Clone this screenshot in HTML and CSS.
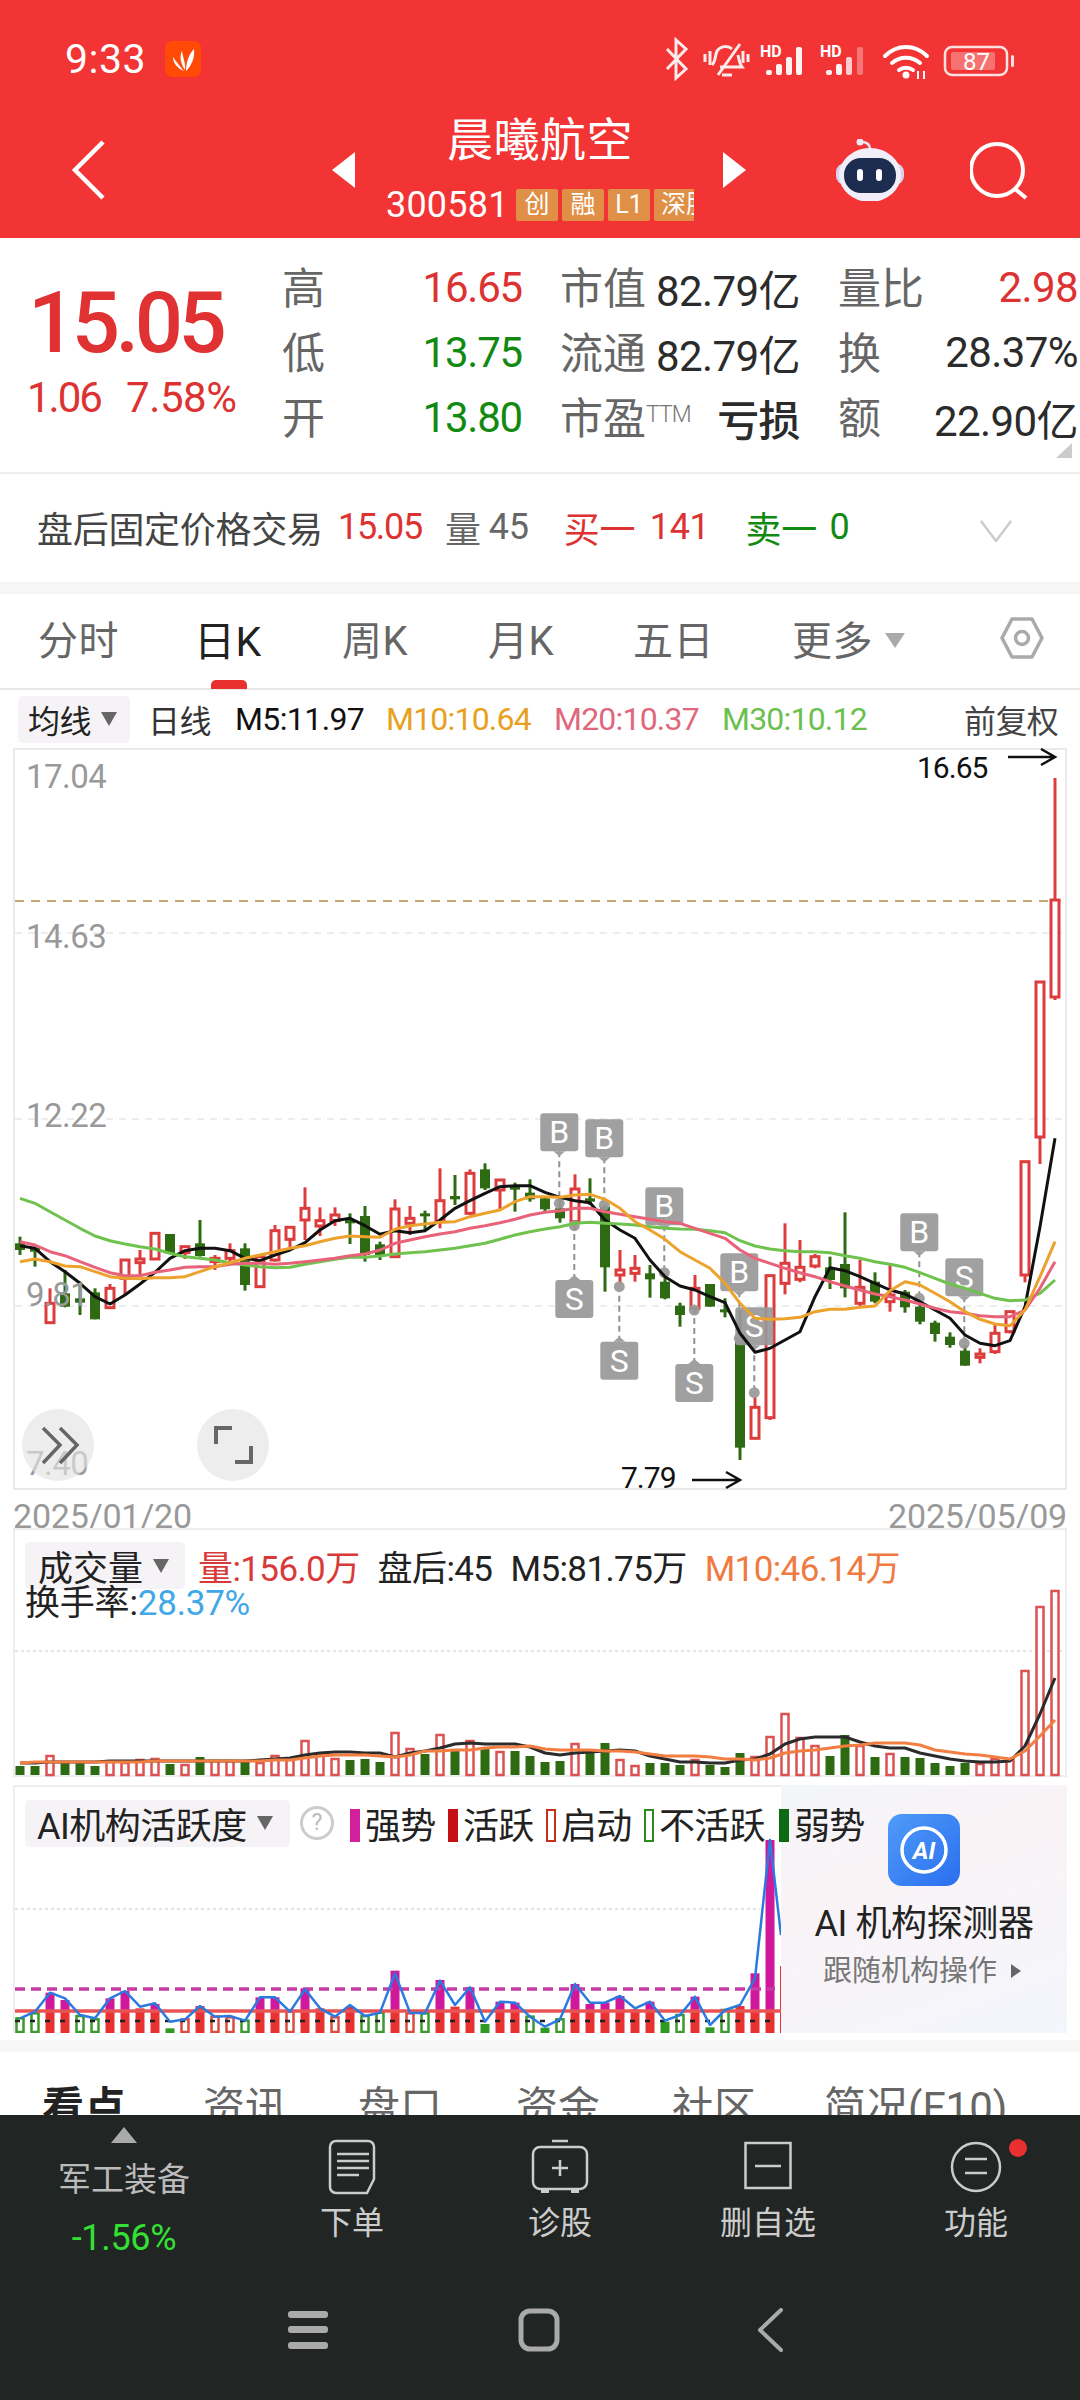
FILE: index.html
```html
<!DOCTYPE html>
<html lang="zh-CN">
<head>
  <meta charset="UTF-8">
  <meta name="viewport" content="width=device-width, initial-scale=1.0">
  <title>晨曦航空</title>
  <link rel="stylesheet" href="styles.css">
</head>
<body>
<div class="page">

  <header class="top">
    <div class="status">
      <span class="clock">9:33</span>
      <svg class="app-icon" viewBox="0 0 36 36">
        <rect width="36" height="36" rx="7" fill="#ff4a08"/>
        <path d="M19 30C12 27 8 22 8 16c3 5 7 9 11 14z" fill="#fff"/>
        <path d="M20 29c-4-6-6-13-3-19 1 7 4 13 3 19z" fill="#fff"/>
        <path d="M21 30c0-9 3-17 8-22 1 8-2 16-8 22z" fill="#fff"/>
      </svg>
      <svg class="status-icons" viewBox="664 36 352 44">
        <path d="M667 48l19 20-10 9V39l10 9-19 20" fill="none" stroke="#fff" stroke-width="3" opacity=".9"/>
        <g fill="none" stroke="#fff" stroke-width="3" opacity=".9">
          <path d="M712 64c4-4 3-10 5-14 3-5 11-6 15-2 M738 54c1 4 1 8 4 12h-22"/>
          <path d="M718 74l22-31"/>
          <path d="M705 53v8M710 50v14M743 50v12M748 53v8"/>
          <path d="M722 74h10"/>
        </g>
        <text class="hd" x="760" y="56">HD</text>
        <g fill="#fff" opacity=".95">
          <rect x="766" y="69" width="6" height="5" rx="2"/><rect x="776" y="63" width="6" height="11" rx="2"/><rect x="786" y="56" width="6" height="18" rx="2"/><rect x="796" y="46" width="6" height="28" rx="2"/>
        </g>
        <text class="hd" x="820" y="56">HD</text>
        <g fill="#fff" opacity=".95">
          <rect x="826" y="69" width="6" height="5" rx="2"/><rect x="836" y="63" width="6" height="11" rx="2"/><rect x="846" y="56" width="6" height="18" rx="2" opacity=".8"/><rect x="857" y="46" width="6" height="28" rx="2" opacity=".35"/>
        </g>
        <g fill="none" stroke="#fff" stroke-width="4" stroke-linecap="round">
          <path d="M885 55c12-12 30-12 42 0"/><path d="M892 62c8-7 20-7 28 0"/><path d="M899 69c4-3 10-3 14 0"/>
        </g>
        <circle cx="906" cy="74" r="3.5" fill="#fff"/>
        <path d="M918 70v8M924 70v8" stroke="#fff" stroke-width="2"/>
        <rect x="945" y="46" width="62" height="28" rx="7" fill="none" stroke="#fff" stroke-width="2.5" opacity=".85"/>
        <rect x="951" y="51" width="44" height="18" rx="2" fill="#fff" opacity=".3"/>
        <rect x="1011" y="54" width="3" height="12" rx="1.5" fill="#fff" opacity=".85"/>
        <text class="batt" x="963" y="69">87</text>
      </svg>
    </div>
    <nav class="stock-nav">
      <svg class="back" viewBox="0 0 35 60"><path d="M32 2L4 30l28 28" fill="none" stroke="#fff" stroke-width="4.5"/></svg>
      <svg class="arrow-left" viewBox="0 0 23 36"><path d="M23 0v36L0 18z" fill="#fff"/></svg>
      <div class="stock-name">
        <div class="title">晨曦航空</div>
        <div class="code-row">
          <span class="code">300581</span>
          <span class="tag">创</span><span class="tag">融</span><span class="tag">L1</span><span class="tag">深股通</span>
        </div>
      </div>
      <svg class="arrow-right" viewBox="0 0 23 36"><path d="M0 0v36l23-18z" fill="#fff"/></svg>
      <svg class="robot" viewBox="836 138 68 62">
        <path d="M870 148c0-5-3-7-9-7" fill="none" stroke="#e9e4f4" stroke-width="2.5"/>
        <circle cx="860" cy="141" r="3.5" fill="#efe9f8"/>
        <rect x="836" y="162" width="68" height="22" rx="9" fill="#d8d4ec"/>
        <ellipse cx="870" cy="174" rx="31" ry="27" fill="#f1eefa"/>
        <rect x="844" y="157" width="52" height="35" rx="17" fill="#1d2d4f"/>
        <rect x="857" y="168" width="6" height="12" rx="3" fill="#fff"/>
        <rect x="876" y="168" width="6" height="12" rx="3" fill="#fff"/>
      </svg>
      <svg class="search" viewBox="970 140 60 60"><circle cx="997" cy="170" r="26" fill="none" stroke="#fff" stroke-width="4"/><path d="M1014 188l12 10" stroke="#fff" stroke-width="4"/></svg>
    </nav>
  </header>

  <section class="quote">
    <div class="quote-main">
      <div class="price-box">
        <div class="price">15.05</div>
        <div class="change"><span class="chg-abs">1.06</span><span class="chg-pct">7.58%</span></div>
      </div>
      <div class="quote-grid">
        <span class="lb">高</span><span class="val red">16.65</span><span class="lb">市值</span><span class="val dark">82.79亿</span><span class="lb">量比</span><span class="val red">2.98</span>
        <span class="lb">低</span><span class="val green">13.75</span><span class="lb">流通</span><span class="val dark">82.79亿</span><span class="lb">换</span><span class="val dark">28.37%</span>
        <span class="lb">开</span><span class="val green">13.80</span><span class="lb">市盈<sup class="ttm">TTM</sup></span><span class="val dark loss">亏损</span><span class="lb">额</span><span class="val dark">22.90亿</span>
      </div>
    </div>
    <i class="corner"></i>
    <div class="after-hours">
      <span class="ah-title">盘后固定价格交易</span>
      <span class="red ah-price">15.05</span>
      <span class="ah-grey ah-vol">量</span><span class="ah-grey ah-num">45</span>
      <span class="red ah-buy">买一</span><span class="red ah-num2">141</span>
      <span class="green ah-sell">卖一</span><span class="green ah-num2">0</span>
      <svg class="ah-chev" viewBox="0 0 32 22"><path d="M1 1l15 20L31 1" fill="none" stroke="#ccc" stroke-width="2.5"/></svg>
    </div>
  </section>
  <div class="band"></div>

  <div class="tabs">
    <span class="tab">分时</span>
    <span class="tab on">日K</span>
    <span class="tab">周K</span>
    <span class="tab">月K</span>
    <span class="tab">五日</span>
    <span class="tab">更多<i class="more-tri"></i></span>
    <svg class="hex" viewBox="0 0 44 42"><path d="M12 2h20l10 19-10 19H12L2 21z" fill="none" stroke="#aaa" stroke-width="3.5" stroke-linejoin="round"/><circle cx="22" cy="21" r="6.5" fill="none" stroke="#aaa" stroke-width="3.5"/></svg>
  </div>

  <div class="ma-legend">
    <span class="pick">均线<i class="tri"></i></span>
    <span class="lg-day">日线</span>
    <span class="lg-m5">M5:11.97</span>
    <span class="lg-m10">M10:10.64</span>
    <span class="lg-m20">M20:10.37</span>
    <span class="lg-m30">M30:10.12</span>
    <span class="lg-fq">前复权</span>
  </div>

  <svg class="kline" id="kline" viewBox="13 748 1054 742"></svg>

  <div class="dates"><span>2025/01/20</span><span>2025/05/09</span></div>

  <section class="vol-panel">
    <svg class="vol" id="vol" viewBox="13 1528 1054 250"></svg>
    <div class="vol-legend">
      <div class="vol-line1">
        <span class="pick pick-vol">成交量<i class="tri"></i></span>
        <span class="v-red">量:156.0万</span>
        <span>盘后:45</span>
        <span>M5:81.75万</span>
        <span class="v-orange">M10:46.14万</span>
      </div>
      <div class="vol-line2">换手率:<span class="v-blue">28.37%</span></div>
    </div>
  </section>

  <section class="ai-panel">
    <svg class="ai" id="ai" viewBox="13 1785 768 248"></svg>
    <div class="promo">
      <svg class="promo-icon" viewBox="0 0 72 72">
        <defs><linearGradient id="ai-blue" x1="0" y1="0" x2="1" y2="1"><stop offset="0" stop-color="#4f9bf8"/><stop offset="1" stop-color="#2a6ff0"/></linearGradient></defs>
        <rect width="72" height="72" rx="14" fill="url(#ai-blue)"/>
        <circle cx="36" cy="36" r="22" fill="none" stroke="#fff" stroke-width="3.5"/>
        <text x="36" y="45" class="promo-ai">AI</text>
      </svg>
      <div class="promo-title">AI 机构探测器</div>
      <div class="promo-sub">跟随机构操作<i class="promo-tri"></i></div>
    </div>
    <div class="ai-legend">
      <span class="pick pick-ai">AI机构活跃度<i class="tri"></i></span>
      <span class="help">?</span>
      <i class="sw sw-strong"></i><span class="sw-text">强势</span>
      <i class="sw sw-active"></i><span class="sw-text">活跃</span>
      <i class="sw sw-start"></i><span class="sw-text">启动</span>
      <i class="sw sw-idle"></i><span class="sw-text">不活跃</span>
      <i class="sw sw-weak"></i><span class="sw-text">弱势</span>
    </div>
  </section>

  <div class="gap-a"></div>
  <div class="band"></div>

  <div class="sub-tabs">
    <span class="sub on">看点</span>
    <span class="sub">资讯</span>
    <span class="sub">盘口</span>
    <span class="sub">资金</span>
    <span class="sub">社区</span>
    <span class="sub">简况(F10)</span>
  </div>

  <footer class="bottom">
    <div class="tools">
      <div class="tool-sector">
        <i class="up-tri"></i>
        <div class="sector-name">军工装备</div>
        <div class="sector-pct">-1.56%</div>
      </div>
      <div class="tool">
        <svg class="tool-icon" viewBox="0 0 48 56"><path d="M8 2h32a6 6 0 0 1 6 6v32l-7 14H8a6 6 0 0 1-6-6V8a6 6 0 0 1 6-6z" fill="none" stroke="#ccc" stroke-width="2.5"/><path d="M9 15h32M9 22h32M9 29h32M9 36h22" stroke="#ccc" stroke-width="2.5"/></svg>
        <span>下单</span>
      </div>
      <div class="tool">
        <svg class="tool-icon" viewBox="0 0 58 56"><rect x="2" y="8" width="54" height="42" rx="7" fill="none" stroke="#ccc" stroke-width="2.5"/><path d="M21 2h16M29 21v16M21 29h16" stroke="#ccc" stroke-width="2.5"/><path d="M10 50h8v4h-8zM40 50h8v4h-8z" fill="#ccc"/></svg>
        <span>诊股</span>
      </div>
      <div class="tool">
        <svg class="tool-icon" viewBox="0 0 48 56"><rect x="1.5" y="4" width="45" height="45" fill="none" stroke="#ccc" stroke-width="2.5"/><path d="M11 27h26" stroke="#ccc" stroke-width="2.5"/></svg>
        <span>删自选</span>
      </div>
      <div class="tool">
        <svg class="tool-icon" viewBox="0 0 52 56"><circle cx="26" cy="28" r="24" fill="none" stroke="#ccc" stroke-width="2.5"/><path d="M15 20h22M15 34h22" stroke="#ccc" stroke-width="2.5"/></svg>
        <i class="dot"></i>
        <span>功能</span>
      </div>
    </div>
    <div class="sys-nav">
      <svg class="sys-menu" viewBox="0 0 40 38"><rect y="0" width="40" height="7" rx="3" fill="#aaa"/><rect y="15" width="40" height="7" rx="3" fill="#aaa"/><rect y="31" width="40" height="7" rx="3" fill="#aaa"/></svg>
      <svg class="sys-home" viewBox="0 0 42 44"><rect x="3" y="3" width="36" height="38" rx="9" fill="none" stroke="#aaa" stroke-width="5"/></svg>
      <svg class="sys-back" viewBox="0 0 26 44"><path d="M24 2L3 22l21 20" fill="none" stroke="#aaa" stroke-width="4" stroke-linecap="round" stroke-linejoin="round"/></svg>
    </div>
  </footer>
</div>
<script src="chart.js"></script>
</body>
</html>
```
FILE: styles.css
```css
* { box-sizing: border-box; }
html, body { margin: 0; padding: 0; }
body {
  width: 1080px;
  height: 2400px;
  overflow: hidden;
  background: #fff;
  font-family: Roboto, "Noto Sans CJK SC", sans-serif;
  color: #333;
}
i { display: block; font-style: normal; }
svg { display: block; flex: none; }
.page { width: 1080px; height: 2400px; overflow: hidden; }

.red { color: #dc3232; }
.green { color: #128a12; }
.dark { color: #2b2b2b; }

/* top red header */
.top { height: 238px; background: #f23434; color: #fff; }
.status { display: flex; align-items: center; height: 84px; padding: 34px 0 0 65px; }
.clock { font-size: 41px; width: 100px; letter-spacing: 0.5px; }
.app-icon { width: 36px; height: 36px; }
.status-icons { width: 352px; height: 44px; margin-left: 463px; }
.hd { font: bold 16px Roboto, sans-serif; fill: #fff; }
.batt { font: 24px Roboto, sans-serif; fill: #fff; }

.stock-nav { display: flex; align-items: center; height: 154px; padding: 18px 0 0 71px; }
.back { width: 35px; height: 60px; }
.arrow-left { width: 23px; height: 36px; margin-left: 226px; }
.stock-name { width: 308px; margin: 0 0 5px 31px; overflow: hidden; white-space: nowrap; }
.title { font-size: 46px; line-height: 62px; text-align: center; letter-spacing: 0.5px; }
.code-row { display: flex; align-items: center; height: 42px; margin-top: 13px; }
.code { flex: none; font-size: 36px; width: 130px; letter-spacing: 0.2px; }
.tag { flex: none; min-width: 42px; height: 32px; line-height: 32px; margin-right: 4px; padding: 0 7px; background: #e08f47; border-radius: 2px; font-size: 25px; text-align: center; }
.arrow-right { width: 23px; height: 36px; margin-left: 29px; }
.robot { width: 68px; height: 62px; margin-left: 90px; }
.search { width: 60px; height: 60px; margin-left: 66px; }

/* quote block */
.quote { position: relative; height: 344px; }
.quote-main { display: flex; height: 236px; padding-top: 17px; border-bottom: 2px solid #eee; }
.price-box { width: 282px; flex: none; padding: 25px 0 0 28px; }
.price { font-size: 85px; line-height: 86px; font-weight: 500; color: #e03232; letter-spacing: -4.5px; }
.change { display: flex; margin: 10px 0 0 -1px; font-size: 42px; line-height: 44px; color: #dc3232; }
.chg-abs { width: 99px; letter-spacing: -2px; }
.chg-pct { letter-spacing: -0.4px; }
.quote-grid {
  flex: 1;
  display: grid;
  grid-template-columns: 60px 180px 100px 178px 100px 1fr;
  grid-auto-rows: 65px;
  align-items: center;
  padding-right: 2px;
  font-size: 42px;
}
.lb { color: #666; white-space: nowrap; font-size: 43px; padding-bottom: 5px; }
.lb:nth-child(6n+3) { padding-left: 38px; width: 150px; }
.lb:nth-child(6n+5) { padding-left: 38px; width: 150px; }
.val { text-align: right; white-space: nowrap; letter-spacing: -1.2px; }
.lb:nth-child(6n+3) + .val, .lb:nth-child(6n+5) + .val { letter-spacing: -0.6px; }
.loss { font-weight: 500; }
.ttm { font-size: 23px; font-weight: 300; vertical-align: 12px; line-height: 0; letter-spacing: -1px; color: #777; }
.corner { position: absolute; right: 8px; top: 205px; width: 0; height: 0; border-left: 16px solid transparent; border-bottom: 15px solid #ccc; }

.after-hours { display: flex; align-items: center; height: 106px; padding-left: 37px; font-size: 36px; white-space: nowrap; letter-spacing: -0.3px; }
.ah-title { width: 301px; color: #444; }
.ah-price { width: 107px; letter-spacing: -1.3px; }
.ah-grey { color: #666; }
.ah-num { width: 75px; margin-left: 8px; }
.ah-buy { width: 86px; }
.ah-sell { width: 84px; margin-left: 36px; }
.ah-chev { width: 32px; height: 22px; position: absolute; left: 980px; top: 282px; }

.band { height: 12px; background: #f6f6f6; }

/* period tabs */
.tabs { position: relative; display: grid; grid-template-columns: 158px 146px 146px 145px 159px 208px 44px; align-items: center; height: 96px; padding: 0 0 6px 38px; border-bottom: 2px solid #e8e8e8; font-size: 40px; color: #666; }
.tab { display: flex; align-items: center; white-space: nowrap; letter-spacing: 0.5px; }
.tab.on { color: #222; margin-left: -2px; font-size: 41px; }
.tab.on::after { content: ""; position: absolute; left: 211px; bottom: -1px; width: 36px; height: 9px; border-radius: 5px 5px 0 0; background: #e8302e; }
.more-tri { width: 0; height: 0; margin: 4px 0 0 12px; border: 10px solid transparent; border-top: 15px solid #aaa; border-bottom: 0; }
.hex { width: 44px; height: 42px; }

.ma-legend { display: flex; align-items: center; height: 58px; padding-left: 18px; font-size: 32px; letter-spacing: -0.6px; white-space: nowrap; color: #222; }
.pick { display: flex; align-items: center; height: 47px; background: #f6f3f6; border-radius: 5px; }
.ma-legend .pick { width: 112px; padding-left: 10px; }
.tri { width: 0; height: 0; margin-left: 10px; border: 8px solid transparent; border-top: 14px solid #666; border-bottom: 0; }
.lg-day { margin-left: 18px; width: 87px; color: #333; }
.lg-m5 { width: 151px; color: #111; }
.lg-m10 { width: 168px; color: #e8a020; letter-spacing: -0.8px; }
.lg-m20 { width: 168px; color: #e0687c; letter-spacing: -0.8px; }
.lg-m30 { width: 242px; color: #6cc04e; letter-spacing: -0.8px; }
.lg-fq { color: #444; }

.kline { width: 1054px; height: 742px; margin-left: 13px; }
.k-label { font: 33px Roboto, sans-serif; fill: #999; letter-spacing: -0.5px; }
.k-mark { font: 32px Roboto, sans-serif; fill: #fff; text-anchor: middle; }
.k-extreme { font: 30px Roboto, sans-serif; fill: #111; letter-spacing: -1px; }

.dates { display: flex; justify-content: space-between; height: 38px; padding: 9px 13px 0; font-size: 34px; line-height: 34px; color: #999; letter-spacing: -0.2px; }

.vol-panel { position: relative; height: 250px; }
.vol { width: 1054px; height: 250px; margin-left: 13px; }
.vol-legend { position: absolute; left: 25px; top: 12px; font-size: 35px; letter-spacing: -0.6px; color: #222; white-space: nowrap; }
.vol-line1 { display: flex; align-items: center; gap: 18px; }
.pick-vol { width: 160px; padding-left: 13px; margin-right: -5px; letter-spacing: 0; }
.v-red { color: #d83a3a; }
.v-orange { color: #f07a40; }
.vol-line2 { margin-top: -10px; line-height: 46px; letter-spacing: -0.2px; }
.v-blue { color: #40a8e8; }

.ai-panel { position: relative; display: flex; height: 248px; margin: 7px 13px 0; }
.ai { width: 768px; height: 248px; }
.promo { width: 286px; background: linear-gradient(160deg, #f3f6fa 0%, #faf3f6 35%, #f3f6fc 100%); text-align: center; padding-top: 29px; color: #222; }
.promo-icon { width: 72px; height: 72px; margin: 0 auto; }
.promo-ai { font: italic bold 24px Roboto, sans-serif; fill: #fff; text-anchor: middle; }
.promo-title { margin-top: 16px; font-size: 36px; line-height: 44px; white-space: nowrap; letter-spacing: -0.4px; }
.promo-sub { display: flex; justify-content: center; align-items: center; margin-top: 5px; font-size: 29px; line-height: 40px; color: #777; padding-right: 4px; }
.promo-tri { width: 0; height: 0; margin-left: 14px; border: 7px solid transparent; border-left: 10px solid #666; border-right: 0; }
.ai-legend { position: absolute; left: 12px; top: 12px; display: flex; align-items: center; font-size: 36px; white-space: nowrap; color: #222; }
.pick-ai { width: 265px; padding-left: 12px; letter-spacing: -0.5px; }
.help { width: 34px; height: 34px; margin: 0 16px 0 10px; border: 3px solid #ccc; border-radius: 50%; font-size: 23px; line-height: 28px; text-align: center; color: #bbb; }
.sw { width: 10px; height: 33px; margin: 4px 5px 0 0; }
.sw-text { width: 83px; letter-spacing: -0.8px; }
.sw-text:nth-last-child(3) { width: 120px; }
.sw-strong { background: #d0209e; }
.sw-active { background: #c40f14; }
.sw-start { border: 2px solid #c8301c; }
.sw-idle { border: 2px solid #2c8a1e; }
.sw-weak { background: #0c6a12; }

.gap-a { height: 7px; }

.sub-tabs { position: relative; display: grid; grid-template-columns: 161px 155px 158px 156px 152px 1fr; height: 63px; padding: 32px 0 0 42px; font-size: 42px; line-height: 48px; color: #666; overflow: hidden; white-space: nowrap; }
.sub.on { color: #222; font-weight: 700; }

/* bottom dark bar */
.bottom { height: 285px; background: #212523; color: #ccc; }
.tools { display: grid; grid-template-columns: 248px 208px 208px 208px 208px; height: 165px; }
.tool-sector { text-align: center; padding-top: 12px; }
.up-tri { width: 0; height: 0; margin: 0 auto; border: 13.5px solid transparent; border-bottom: 16px solid #aaa; border-top: 0; }
.sector-name { margin-top: 15px; font-size: 33px; line-height: 44px; color: #bbb; }
.sector-pct { margin-top: 16px; font-size: 36px; line-height: 40px; color: #35e035; letter-spacing: -0.3px; }
.tool { position: relative; display: flex; flex-direction: column; align-items: center; padding-top: 24px; font-size: 32px; }
.tool-icon { height: 56px; }
.tool span { margin-top: 6px; line-height: 44px; }
.dot { position: absolute; left: 137px; top: 24px; width: 18px; height: 18px; border-radius: 50%; background: #e83030; }
.sys-nav { display: flex; align-items: flex-start; padding: 28px 0 0 288px; }
.sys-menu { width: 40px; height: 38px; margin-top: 3px; }
.sys-home { width: 42px; height: 44px; margin-left: 190px; }
.sys-back { width: 26px; height: 44px; margin-left: 197px; }
```
FILE: chart.js
```js
// zoomed pixel values -> page coordinates
function X(i) { return 20 + 15 * i; }
function Y(v) { return 1080 + v / 3; }

// type, wick top, body top, body bottom, wick bottom
var candles = [
  ['g',470,490,510,525],['g',500,503,515,560],['r',625,670,728,730],['g',570,640,680,682],['g',605,655,668,705],
  ['g',625,637,718,718],['r',612,625,683,685],['r',538,540,595,645],['r',510,537,548,590],['r',460,460,537,537],
  ['g',462,462,520,520],['r',500,500,518,537],['g',420,490,528,530],['r',525,535,545,570],['r',490,512,535,550],
  ['g',490,505,615,632],['r',525,530,620,622],['r',435,452,540,545],['r',440,442,478,510],['r',322,385,420,480],
  ['r',382,422,438,468],['r',382,405,422,438],['g',400,420,430,492],['g',378,408,525,545],['g',485,493,525,540],
  ['r',358,387,530,532],['r',378,415,430,465],['g',392,400,408,450],['r',265,362,425,445],['g',285,348,358,375],
  ['r',268,280,400,405],['g',250,268,325,330],['r',298,300,330,390],['g',308,320,328,395],['g',298,338,358,365],
  ['g',350,355,388,395],['g',350,385,415,428],['r',283,327,425,450],['g',295,355,365,375],['g',375,380,562,635],
  ['r',510,570,585,610],['r',525,565,580,605],['g',555,580,598,653],['g',580,605,655,658],['g',668,677,705,740],
  ['r',585,625,685,700],['g',612,612,680,680],['g',655,688,695,712],['g',690,780,1103,1140],['r',950,982,1075,1075],
  ['r',587,587,1013,1020],['r',430,550,610,643],['r',480,562,598,607],['r',522,530,558,565],['g',530,562,600,627],
  ['g',397,552,625,652],['r',540,622,670,680],['g',577,605,665,670],['r',555,645,665,695],['g',630,635,682,698],
  ['g',675,680,725,733],['g',722,728,762,785],['g',757,770,795,803],['g',795,812,857,857],['r',805,822,832,850],
  ['r',735,760,815,822],['r',695,695,755,760],['r',245,245,585,607],['r',-294,-294,171,252],['r',-906,-540,-249,-240]
];

var m5 = [497,505,545,575,610,650,672,645,612,577,535,512,505,505,512,535,542,525,510,488,450,422,415,437,463,452,458,452,420,385,362,340,320,317,317,337,352,362,368,420,450,475,540,590,618,630,650,668,760,817,805,780,755,650,563,572,590,610,630,642,665,690,715,765,790,797,782,680,440,175];
var m10 = [545,537,545,558,560,575,590,595,596,593,593,590,575,560,548,535,525,515,505,497,485,475,468,470,472,448,437,432,427,425,410,400,390,365,350,350,352,345,343,358,385,425,450,478,515,540,565,610,670,715,718,716,712,695,688,688,682,678,632,605,615,640,665,695,718,732,737,690,590,485];
var m20 = [485,495,515,527,545,562,578,587,587,577,570,562,560,560,553,550,550,553,550,545,540,535,527,522,510,490,480,470,462,455,445,437,428,418,405,397,392,385,385,395,403,410,418,425,430,445,460,475,510,535,550,565,578,590,605,618,630,642,650,660,672,685,695,700,707,710,710,690,625,545];
var m30 = [355,370,395,420,445,468,482,492,500,507,520,530,535,540,548,555,560,563,562,553,545,538,532,532,528,522,518,515,510,505,497,490,478,465,455,447,440,430,427,430,432,435,440,445,447,448,452,458,482,498,507,512,515,515,518,527,535,545,553,562,578,595,612,625,640,655,662,660,640,600];

// kind, center x in zoom px, box top, dot y
var marks = [
  ['B',110,100,370],['B',236,118,375],['S',152,600,437],['S',278,785,620],['B',404,322,578],
  ['S',488,852,690],['B',614,520,775],['S',656,682,938],['B',1118,400,655],['S',1244,535,790]
];

function poly(pts, color, width, extra) {
  return '<polyline fill="none" stroke="' + color + '" stroke-width="' + width + '" stroke-linejoin="round" points="' + pts.join(' ') + '" ' + (extra || '') + '/>';
}

function maLine(list, color) {
  var pts = list.map(function(v, i) { return X(i) + ',' + Y(v).toFixed(1); });
  return poly(pts, color, 3);
}

function arrow(x1, x2, y) {
  return '<path d="M' + x1 + ' ' + y + 'H' + x2 + 'M' + (x2 - 14) + ' ' + (y - 8) + 'L' + x2 + ' ' + y + 'L' + (x2 - 14) + ' ' + (y + 8) + '" fill="none" stroke="#111" stroke-width="2.5"/>';
}

function drawKline() {
  var s = '';
  s += '<rect x="14" y="749" width="1052" height="740" fill="#fff" stroke="#eaeaea" stroke-width="2"/>';
  [933, 1119, 1306].forEach(function(y) {
    s += '<path d="M15 ' + y + 'H1065" stroke="#e8e8e8" stroke-width="1.5" stroke-dasharray="7 6"/>';
  });
  s += '<path d="M15 901H1061" stroke="#c4a878" stroke-width="2" stroke-dasharray="9 7"/>';

  candles.forEach(function(c, i) {
    var x = X(i), wt = Y(c[1]), bt = Y(c[2]), bb = Y(c[3]), wb = Y(c[4]);
    if (c[0] === 'g') {
      s += '<path d="M' + x + ' ' + wt + 'V' + wb + '" stroke="#2d6a12" stroke-width="3"/>';
      s += '<rect x="' + (x - 5) + '" y="' + bt + '" width="10" height="' + Math.max(bb - bt, 3) + '" fill="#2d6a12"/>';
    } else {
      if (wt < bt) s += '<path d="M' + x + ' ' + wt + 'V' + bt + '" stroke="#dc3c3c" stroke-width="3"/>';
      if (wb > bb) s += '<path d="M' + x + ' ' + bb + 'V' + wb + '" stroke="#dc3c3c" stroke-width="3"/>';
      s += '<rect x="' + (x - 4) + '" y="' + bt + '" width="8" height="' + (bb - bt) + '" fill="#fff" stroke="#dc3c3c" stroke-width="3"/>';
    }
  });

  marks.forEach(function(m) {
    var x = 520 + m[1] / 2.8, top = Y(m[2]), dot = Y(m[3]), bottom = top + 38;
    var down = dot > top;
    var cy = top + 19;
    s += '<g opacity=".92">';
    s += '<path d="M' + x + ' ' + (down ? bottom : top) + 'V' + dot + '" stroke="#888" stroke-width="2" stroke-dasharray="6 4"/>';
    s += '<circle cx="' + x + '" cy="' + dot + '" r="5.5" fill="#999"/>';
    s += '<rect x="' + (x - 19) + '" y="' + top + '" width="38" height="38" rx="3" fill="#999"/>';
    if (down) s += '<path d="M' + (x - 6) + ' ' + bottom + 'h12l-6 5z" fill="#999"/>';
    else s += '<path d="M' + (x - 6) + ' ' + top + 'h12l-6 -5z" fill="#999"/>';
    s += '</g>';
    s += '<text class="k-mark" x="' + x + '" y="' + (cy + 11) + '">' + m[0] + '</text>';
  });

  s += maLine(m5, '#111');
  s += maLine(m30, '#70c24e');
  s += maLine(m20, '#e8627a');
  s += maLine(m10, '#eca22c');

  // axis labels are painted over the candles
  [['17.04',788],['14.63',948],['12.22',1127],['9.81',1306],['7.40',1475]].forEach(function(l) {
    s += '<text class="k-label" x="26" y="' + l[1] + '">' + l[0] + '</text>';
  });

  s += '<text class="k-extreme" x="917" y="778">16.65</text>' + arrow(1008, 1055, 757);
  s += '<text class="k-extreme" x="621" y="1488">7.79</text>' + arrow(692, 740, 1480);

  s += '<circle cx="58" cy="1445" r="36" fill="#e4e4e4" opacity=".65"/>';
  s += '<circle cx="233" cy="1445" r="36" fill="#e4e4e4" opacity=".65"/>';
  s += '<path d="M43 1428l17 17-17 18M60 1428l17 17-17 18" fill="none" stroke="#666" stroke-width="3.5"/>';
  s += '<path d="M232 1428h-16v16M235 1462h16v-16" fill="none" stroke="#666" stroke-width="4"/>';
  document.getElementById('kline').innerHTML = s;
}

// bar height above the baseline, colour comes from the candle of the same day
var volumes = [9,9,19,14,12,9,13,12,15,16,11,10,18,14,14,13,12,19,15,34,20,16,15,16,13,42,26,21,40,25,34,26,23,24,19,13,14,31,23,32,15,9,12,12,10,15,10,8,22,18,38,61,37,29,19,40,29,18,21,18,17,12,9,12,11,16,15,104,168,184];
var vm5 = [12,12,13,13,13,13,14,14,14,14,14,14,14,14,14,14,15,16,17,20,22,23,23,22,22,18,22,24,27,31,32,31,31,31,28,22,20,22,23,24,25,24,19,16,13,13,12,12,15,16,21,31,36,38,38,38,33,29,27,27,22,19,16,14,13,13,14,29,61,97];
var vm10 = [12,13,13,13,13,13,13,13,13,14,14,14,14,14,14,14,14,15,15,17,19,20,20,20,19,18,20,24,24,25,25,27,28,28,29,26,25,25,25,24,24,23,21,19,19,19,18,16,16,15,17,22,24,25,27,29,30,32,32,32,30,25,23,21,20,18,16,24,39,55];

function drawVol() {
  var base = 1775;
  var s = '<path d="M14 1778V1529H1066V1778" fill="none" stroke="#eee" stroke-width="2"/>';
  s += '<path d="M15 1651H1065" stroke="#e4e4e4" stroke-width="2" stroke-dasharray="3 3"/>';
  s += '<path d="M15 1776H1065" stroke="#eee" stroke-width="2"/>';
  volumes.forEach(function(h, i) {
    var x = X(i);
    if (candles[i][0] === 'g') {
      s += '<rect x="' + (x - 4.5) + '" y="' + (base - h) + '" width="9" height="' + h + '" fill="#2d6a12"/>';
    } else {
      s += '<rect x="' + (x - 3.5) + '" y="' + (base - h) + '" width="7" height="' + h + '" fill="#fff" stroke="#dc5252" stroke-width="2.5"/>';
    }
  });
  var a = vm5.map(function(h, i) { return X(i) + ',' + (base - h); });
  var b = vm10.map(function(h, i) { return X(i) + ',' + (base - h); });
  s += poly(a, '#2b2b2b', 3) + poly(b, '#f27e42', 3);
  document.getElementById('vol').innerHTML = s;
}

// type (m magenta+red, r red, o red outline, q green outline, g green), top in zoom px
var aiBars = [
  ['q',175],['q',160],['m',98],['m',120],['q',168],['q',178],['m',115],['m',93],['r',145],['m',132],['g',205],['o',178],
  ['r',138],['o',170],['o',172],['q',182],['m',112],['m',112],['o',155],['m',85],['r',145],['o',172],['r',140],['q',168],
  ['q',158],['m',32],['o',160],['q',160],['m',60],['r',140],['m',82],['g',192],['m',125],['m',128],['q',170],['g',203],
  ['q',178],['m',72],['m',132],['m',128],['m',108],['r',148],['m',125],['g',185],['q',165],['m',110],['g',202],['q',150],
  ['r',138],['m',40],['m',-360]
];
var aiLine = [175,155,98,115,165,175,115,93,140,130,185,178,138,170,168,182,112,112,155,88,145,170,135,168,158,40,158,160,62,135,82,185,125,128,170,200,178,72,128,128,108,145,125,182,165,110,195,150,135,55,-360];

function drawAi() {
  var base = 2033, redLine = 2011;
  function top(v) { return 1960 + v / 3; }
  var s = '<path d="M14 2033V1786H781" fill="none" stroke="#eee" stroke-width="2"/>';
  s += '<path d="M15 1909H760" stroke="#e2e2e2" stroke-width="2" stroke-dasharray="3 3"/>';
  aiBars.forEach(function(b, i) {
    var x = X(i), t = top(b[1]);
    if (b[0] === 'm') {
      s += '<rect x="' + (x - 4.5) + '" y="' + t + '" width="9" height="' + (redLine - t) + '" fill="#d0189c"/>';
      s += '<rect x="' + (x - 4.5) + '" y="' + redLine + '" width="9" height="' + (base - redLine) + '" fill="#e83232"/>';
    } else if (b[0] === 'r') {
      s += '<rect x="' + (x - 4.5) + '" y="' + t + '" width="9" height="' + (base - t) + '" fill="#e83232"/>';
    } else if (b[0] === 'g') {
      s += '<rect x="' + (x - 4.5) + '" y="' + t + '" width="9" height="' + (base - t) + '" fill="#2f9a22"/>';
    } else {
      s += '<rect x="' + (x - 3.5) + '" y="' + t + '" width="7" height="' + (base - t - 1) + '" fill="#fff" stroke="' + (b[0] === 'o' ? '#dc4a40' : '#3a9a2a') + '" stroke-width="2.5"/>';
    }
  });
  s += '<rect x="780" y="1966" width="1.5" height="67" fill="#e83232"/>';
  s += '<path d="M15 2021H770" stroke="#222" stroke-width="2.5" stroke-dasharray="5 10"/>';
  s += '<path d="M15 2011H781" stroke="#e85454" stroke-width="3.5"/>';
  s += '<path d="M15 1989H775" stroke="#c83aa4" stroke-width="3.5" stroke-dasharray="10 6"/>';
  var pts = aiLine.map(function(v, i) { return X(i) + ',' + top(v); });
  pts.push('781,1935');
  s += poly(pts, '#2a7ae0', 2.5);
  document.getElementById('ai').innerHTML = s;
}

drawKline();
drawVol();
drawAi();
```
